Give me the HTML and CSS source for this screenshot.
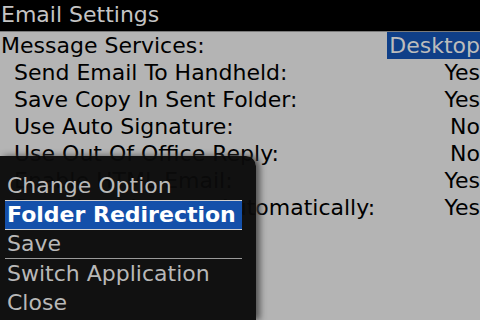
FILE: index.html
```html
<!DOCTYPE html>
<html>
<head>
  <title>Email Settings</title>
  <link rel="stylesheet" href="styles.css">
</head>
<body>
  <div class="screen">
    <div class="title-bar">Email Settings</div>
    <div class="settings">
      <div class="row">
        <span class="label">Message Services:</span>
        <span class="value selected">Desktop</span>
      </div>
      <div class="row sub">
        <span class="label">Send Email To Handheld:</span>
        <span class="value">Yes</span>
      </div>
      <div class="row sub">
        <span class="label">Save Copy In Sent Folder:</span>
        <span class="value">Yes</span>
      </div>
      <div class="row sub">
        <span class="label">Use Auto Signature:</span>
        <span class="value">No</span>
      </div>
      <div class="row sub">
        <span class="label">Use Out Of Office Reply:</span>
        <span class="value">No</span>
      </div>
      <div class="row sub">
        <span class="label">Enable HTML Email:</span>
        <span class="value">Yes</span>
      </div>
      <div class="row sub">
        <span class="label">Download Images Automatically:</span>
        <span class="value">Yes</span>
      </div>
    </div>

    <div class="menu">
      <div class="menu-item">Change Option</div>
      <div class="menu-item active">Folder Redirection</div>
      <div class="menu-item">Save</div>
      <div class="menu-item no-line">Switch Application</div>
      <div class="menu-item no-line">Close</div>
    </div>
  </div>
</body>
</html>
```

FILE: styles.css
```css
body {
  margin: 0;
  padding: 0;
  background-color: #b4b4b4;
  font-family: "DejaVu Sans", sans-serif;
  font-size: 22px;
}

.screen {
  position: relative;
  width: 480px;
  height: 320px;
  overflow: hidden;
  background-color: #b4b4b4;
}

.title-bar {
  height: 31px;
  line-height: 29px;
  background-color: #000;
  color: #c4c4c4;
  padding-left: 1px;
  border-bottom: 1px solid #7a7a7a;
  white-space: nowrap;
}

.row {
  display: flex;
  justify-content: space-between;
  align-items: center;
  height: 27px;
  color: #000;
  padding-left: 1px;
  white-space: nowrap;
}

.row.sub {
  padding-left: 14px;
}

.value.selected {
  background-color: #0f3f88;
  color: #bcbcbc;
  height: 27px;
  line-height: 27px;
  padding-left: 2px;
}

.menu {
  position: absolute;
  left: 0;
  top: 156px;
  width: 256px;
  height: 164px;
  padding-top: 16px;
  box-sizing: border-box;
  background-color: rgba(10, 10, 10, 0.96);
  border-top-right-radius: 10px;
  box-shadow: 4px 0 6px rgba(60, 60, 60, 0.8);
}

.menu-item {
  margin: 0 14px 0 5px;
  height: 28px;
  line-height: 28px;
  padding-left: 2px;
  color: #b8b8b8;
  border-bottom: 1px solid #9a9a9a;
  white-space: nowrap;
}

.menu-item.no-line {
  border-bottom: none;
  height: 29px;
  line-height: 29px;
}

.menu-item.active {
  background-color: #1450aa;
  color: #fff;
  font-weight: bold;
  height: 28px;
  line-height: 28px;
  border-top: 1px solid #d0d0d0;
  border-bottom: 1px solid #d0d0d0;
  margin-top: -1px;
}
```
